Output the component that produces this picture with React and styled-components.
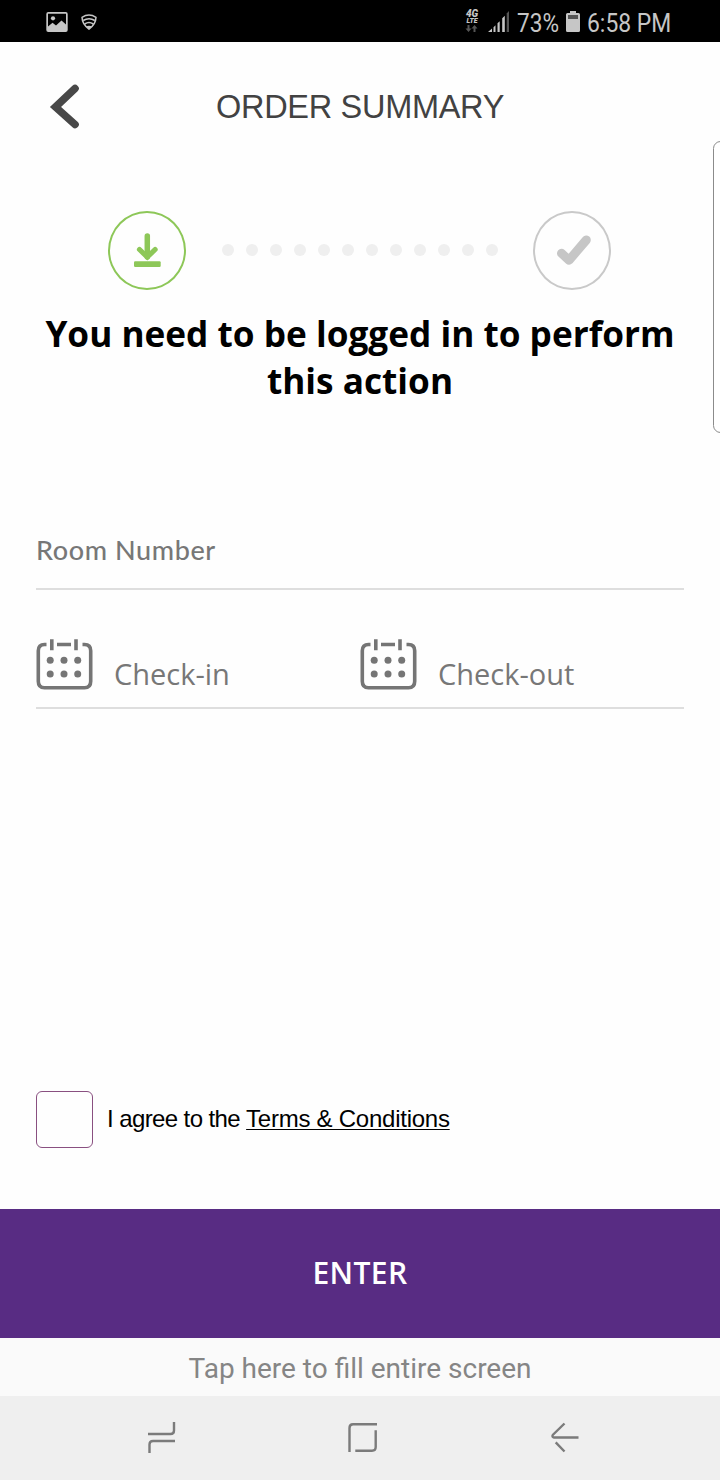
import React from "react";
import styled, {createGlobalStyle} from "styled-components";

const CalendarIcon = () => (
	<svg width="58" height="54" viewBox="0.5 0.7 58 54" fill="none" stroke="#757575" strokeWidth="3.6">
		<path d="M11 6.2H9Q2.8 6.2 2.8 12.5V43Q2.8 49.5 9 49.5H49Q55.2 49.5 55.2 43V12.5Q55.2 6.2 49 6.2H47" />
		<path d="M21.5 6.2H35.5M16.3 1V12M40.5 1V12" />
		<g fill="#757575" stroke="none">
			<circle cx="14.7" cy="22" r="3.5" />
			<circle cx="28.5" cy="22" r="3.5" />
			<circle cx="42.2" cy="22" r="3.5" />
			<circle cx="14.7" cy="35.7" r="3.5" />
			<circle cx="28.5" cy="35.7" r="3.5" />
			<circle cx="42.2" cy="35.7" r="3.5" />
		</g>
	</svg>
);

const StatusBar = () => (
	<Status>
		<svg width="60" height="42" viewBox="46 0 60 42">
			<path
				fill="#c6c6c6"
				fillRule="evenodd"
				d="M48.3 12H65.7Q67.7 12 67.7 14V30Q67.7 32 65.7 32H48.3Q46.3 32 46.3 30V14Q46.3 12 48.3 12ZM48 13.7V26.5L52.5 22.7L56 25.5L61.5 20.5L66 24.5V13.7Z"
			/>
			<circle cx="53" cy="18.3" r="2.1" fill="#c6c6c6" />
			<g fill="none" stroke="#c6c6c6" strokeWidth="1.5">
				<path d="M82 17.3Q89 12.7 96 17.3Q95.8 24.5 89 29Q82.2 24.5 82 17.3Z" />
				<path d="M83.2 20.5Q89 17 94.8 20.5M84.7 24Q89 21.2 93.3 24" />
			</g>
			<path fill="#c6c6c6" d="M86 26.6Q89 24.8 92 26.6L89 29.5Z" />
		</svg>
		<StatusRight>
			<Network>
				<NetworkText $size={10}>4G</NetworkText>
				<NetworkText $size={7}>LTE</NetworkText>
				<svg width="14" height="9" viewBox="0 0 14 9" fill="#555">
					<path d="M2.5 1H4.5V4.5H6.5L3.5 8L.5 4.5H2.5ZM8.5 8V4.5H6.5L9.5 1L12.5 4.5H10.5V8Z" />
				</svg>
			</Network>
			<svg width="23" height="42" viewBox="487 0 23 42">
				<path
					fill="#c6c6c6"
					d="M488 32L492 28.5V32ZM493.5 27.2L495.5 25.3V32H493.5ZM497.5 23.3L499.7 21.2V32H497.5ZM502.2 18.3L504.8 15.7V32H502.2Z"
				/>
				<path fill="#555" d="M506.7 13.5L509 11V32H506.7Z" />
			</svg>
			<Percent>73%</Percent>
			<svg width="16" height="42" viewBox="565 0 16 42">
				<path
					fill="#c6c6c6"
					d="M570 11H576V13H578.5Q580 13 580 14.5V30.5Q580 32 578.5 32H567.5Q566 32 566 30.5V14.5Q566 13 567.5 13H570Z"
				/>
				<path fill="#555" d="M568 15H578V19H568Z" />
			</svg>
			<Clock>6:58 PM</Clock>
		</StatusRight>
	</Status>
);

const App = () => {
	return (
		<Container>
			<GlobalStyle />
			<StatusBar />
			<Header>
				<BackButton aria-label="Back">
					<svg width="32" height="46" viewBox="0 0.5 32 46" fill="none">
						<path d="M26 5L6.5 23.5L26 41" stroke="#484848" strokeWidth="7.6" strokeLinecap="round" />
					</svg>
				</BackButton>
				<Title>ORDER SUMMARY</Title>
			</Header>
			<Steps>
				<Step $color="#8dc758">
					<svg width="74" height="75" viewBox="110 213 74 75" fill="none" stroke="#8dc758">
						<path d="M147.3 236V257" strokeWidth="5.5" strokeLinecap="round" />
						<path d="M139.5 249.5L147.3 257L155.1 249.5" strokeWidth="5.2" strokeLinecap="round" />
						<rect x="134" y="261.3" width="26.7" height="5.6" rx="1.2" fill="#8dc758" stroke="none" />
					</svg>
				</Step>
				<Dots>
					{Array.from({length: 12}, (_, i) => (
						<Dot key={i} />
					))}
				</Dots>
				<Step $color="#c9c9c9">
					<svg width="74" height="75" viewBox="535 213 74 75" fill="none" stroke="#c6c6c6">
						<path d="M561.5 253.3L569 260.3L586.3 240" strokeWidth="9" strokeLinecap="round" strokeLinejoin="round" />
					</svg>
				</Step>
			</Steps>
			<Message>
				You need to be logged in to perform
				<br />
				this action
			</Message>
			<Form>
				<RoomField>Room Number</RoomField>
				<Dates>
					<DateField>
						<CalendarIcon />
						<DateLabel>Check-in</DateLabel>
					</DateField>
					<DateField>
						<CalendarIcon />
						<DateLabel>Check-out</DateLabel>
					</DateField>
				</Dates>
			</Form>
			<Agreement>
				<Checkbox />
				<AgreementText>
					I agree to the <Terms>Terms &amp; Conditions</Terms>
				</AgreementText>
			</Agreement>
			<EnterButton>ENTER</EnterButton>
			<FillBar>Tap here to fill entire screen</FillBar>
			<NavBar>
				<svg width="720" height="84" viewBox="0 1396 720 84" fill="none" stroke="#7b7b7b" strokeWidth="2.4">
					<path d="M148 1434H170.5Q174 1434 174 1430.5V1422M175 1441H153Q149.5 1441 149.5 1444.5V1453" />
					<path d="M377 1424.3H353Q349.5 1424.3 349.5 1428V1452M355.3 1450.7H372Q375.7 1450.7 375.7 1447V1430.3" />
					<path d="M578.5 1437.5H554Q551.5 1437 553 1434.7L564.5 1423.5M555.7 1442.3L564.5 1451.5" />
				</svg>
			</NavBar>
			<EdgeHandle />
		</Container>
	);
};

export default App;

const GlobalStyle = createGlobalStyle`
	body {
		margin: 0;
		background: #fff;
	}
	* {
		box-sizing: border-box;
	}
	svg {
		display: block;
		flex-shrink: 0;
	}
`;

const Container = styled.div`
	position: relative;
	display: flex;
	flex-direction: column;
	width: 720px;
	height: 1480px;
	overflow: hidden;
	background: #fefefe;
	font-family: "Open Sans", sans-serif;
`;

const Status = styled.div`
	display: flex;
	justify-content: space-between;
	height: 42px;
	padding: 0 48px 0 46px;
	background: #000;
	color: #c6c6c6;
	font-family: Roboto, sans-serif;
	font-size: 26px;
	line-height: 46px;
	white-space: nowrap;
`;

const StatusRight = styled.div`
	display: flex;
`;

const Network = styled.div`
	display: flex;
	flex-direction: column;
	align-items: center;
	width: 14px;
	padding-top: 10px;
	margin-right: 8px;
`;

const NetworkText = styled.span`
	font-size: ${(props) => props.$size}px;
	line-height: ${(props) => (props.$size > 8 ? 8 : 6)}px;
	font-weight: 900;
	font-style: italic;
`;

const Percent = styled.span`
	width: 42px;
	margin: 0 6px 0 7px;
	transform: scaleX(0.87);
	transform-origin: left;
`;

const Clock = styled.span`
	width: 85px;
	margin-left: 6px;
	transform: scaleX(0.88);
	transform-origin: left;
`;

const Header = styled.header`
	display: flex;
	align-items: center;
	height: 130px;
	padding: 0 49px;
`;

const BackButton = styled.button`
	width: 32px;
	height: 46px;
	padding: 0;
	border: none;
	background: none;
`;

const Title = styled.h1`
	flex: 1;
	margin: 0 32px 0 0;
	text-align: center;
	color: #424242;
	font: 400 32.5px "Liberation Sans", sans-serif;
	letter-spacing: -0.3px;
`;

const Steps = styled.div`
	display: flex;
	align-items: center;
	justify-content: space-between;
	height: 80px;
	margin-top: 38px;
	padding: 0 109px 0 108px;
`;

const Step = styled.div`
	width: 78px;
	height: 79px;
	border: 2px solid ${(props) => props.$color};
	border-radius: 50%;
`;

const Dots = styled.div`
	display: flex;
	gap: 12px;
`;

const Dot = styled.span`
	width: 12px;
	height: 12px;
	border-radius: 50%;
	background: #efefef;
`;

const Message = styled.h2`
	height: 94px;
	margin: 20px 0 0;
	text-align: center;
	color: #000;
	font-size: 35.2px;
	font-weight: 700;
	line-height: 47px;
	white-space: nowrap;
`;

const Form = styled.div`
	margin: 108px 36px 0;
`;

const RoomField = styled.div`
	height: 78px;
	border-bottom: 2px solid #dedede;
	color: #777;
	font: 500 27px/76px Lato, sans-serif;
	letter-spacing: 0.6px;
`;

const Dates = styled.div`
	display: grid;
	grid-template-columns: 1fr 1fr;
	height: 119px;
	border-bottom: 2px solid #dedede;
`;

const DateField = styled.div`
	display: flex;
	align-items: flex-start;
	gap: 20px;
	padding-top: 49px;
`;

const DateLabel = styled.span`
	margin-top: 15px;
	color: #777;
	font-size: 29px;
	line-height: 40px;
`;

const Agreement = styled.div`
	display: flex;
	align-items: center;
	gap: 14px;
	height: 57px;
	margin: 382px 36px 0;
`;

const Checkbox = styled.span`
	width: 57px;
	height: 57px;
	border: 1.5px solid #894f80;
	border-radius: 6px;
`;

const AgreementText = styled.span`
	padding-bottom: 1px;
	color: #000;
	font: 24px "Liberation Sans", sans-serif;
	letter-spacing: -0.6px;
	white-space: nowrap;
`;

const Terms = styled.span`
	letter-spacing: -0.25px;
	text-decoration: underline;
	text-decoration-thickness: 1px;
	text-underline-offset: 2px;
	text-decoration-skip-ink: none;
`;

const EnterButton = styled.button`
	height: 129px;
	margin-top: 61px;
	padding: 0 0 2px;
	border: none;
	background: #582c83;
	color: #fff;
	font: 600 30px "Open Sans", sans-serif;
	letter-spacing: 0.4px;
`;

const FillBar = styled.div`
	height: 58px;
	background: #fafafa;
	color: #858585;
	font: 28px/62px Roboto, sans-serif;
	text-align: center;
`;

const NavBar = styled.nav`
	height: 84px;
	background: #efefef;
`;

const EdgeHandle = styled.div`
	position: absolute;
	top: 141px;
	right: -8px;
	width: 15px;
	height: 292px;
	border: 1px solid #8b8b8b;
	border-radius: 9px;
	background: #fff;
`;
